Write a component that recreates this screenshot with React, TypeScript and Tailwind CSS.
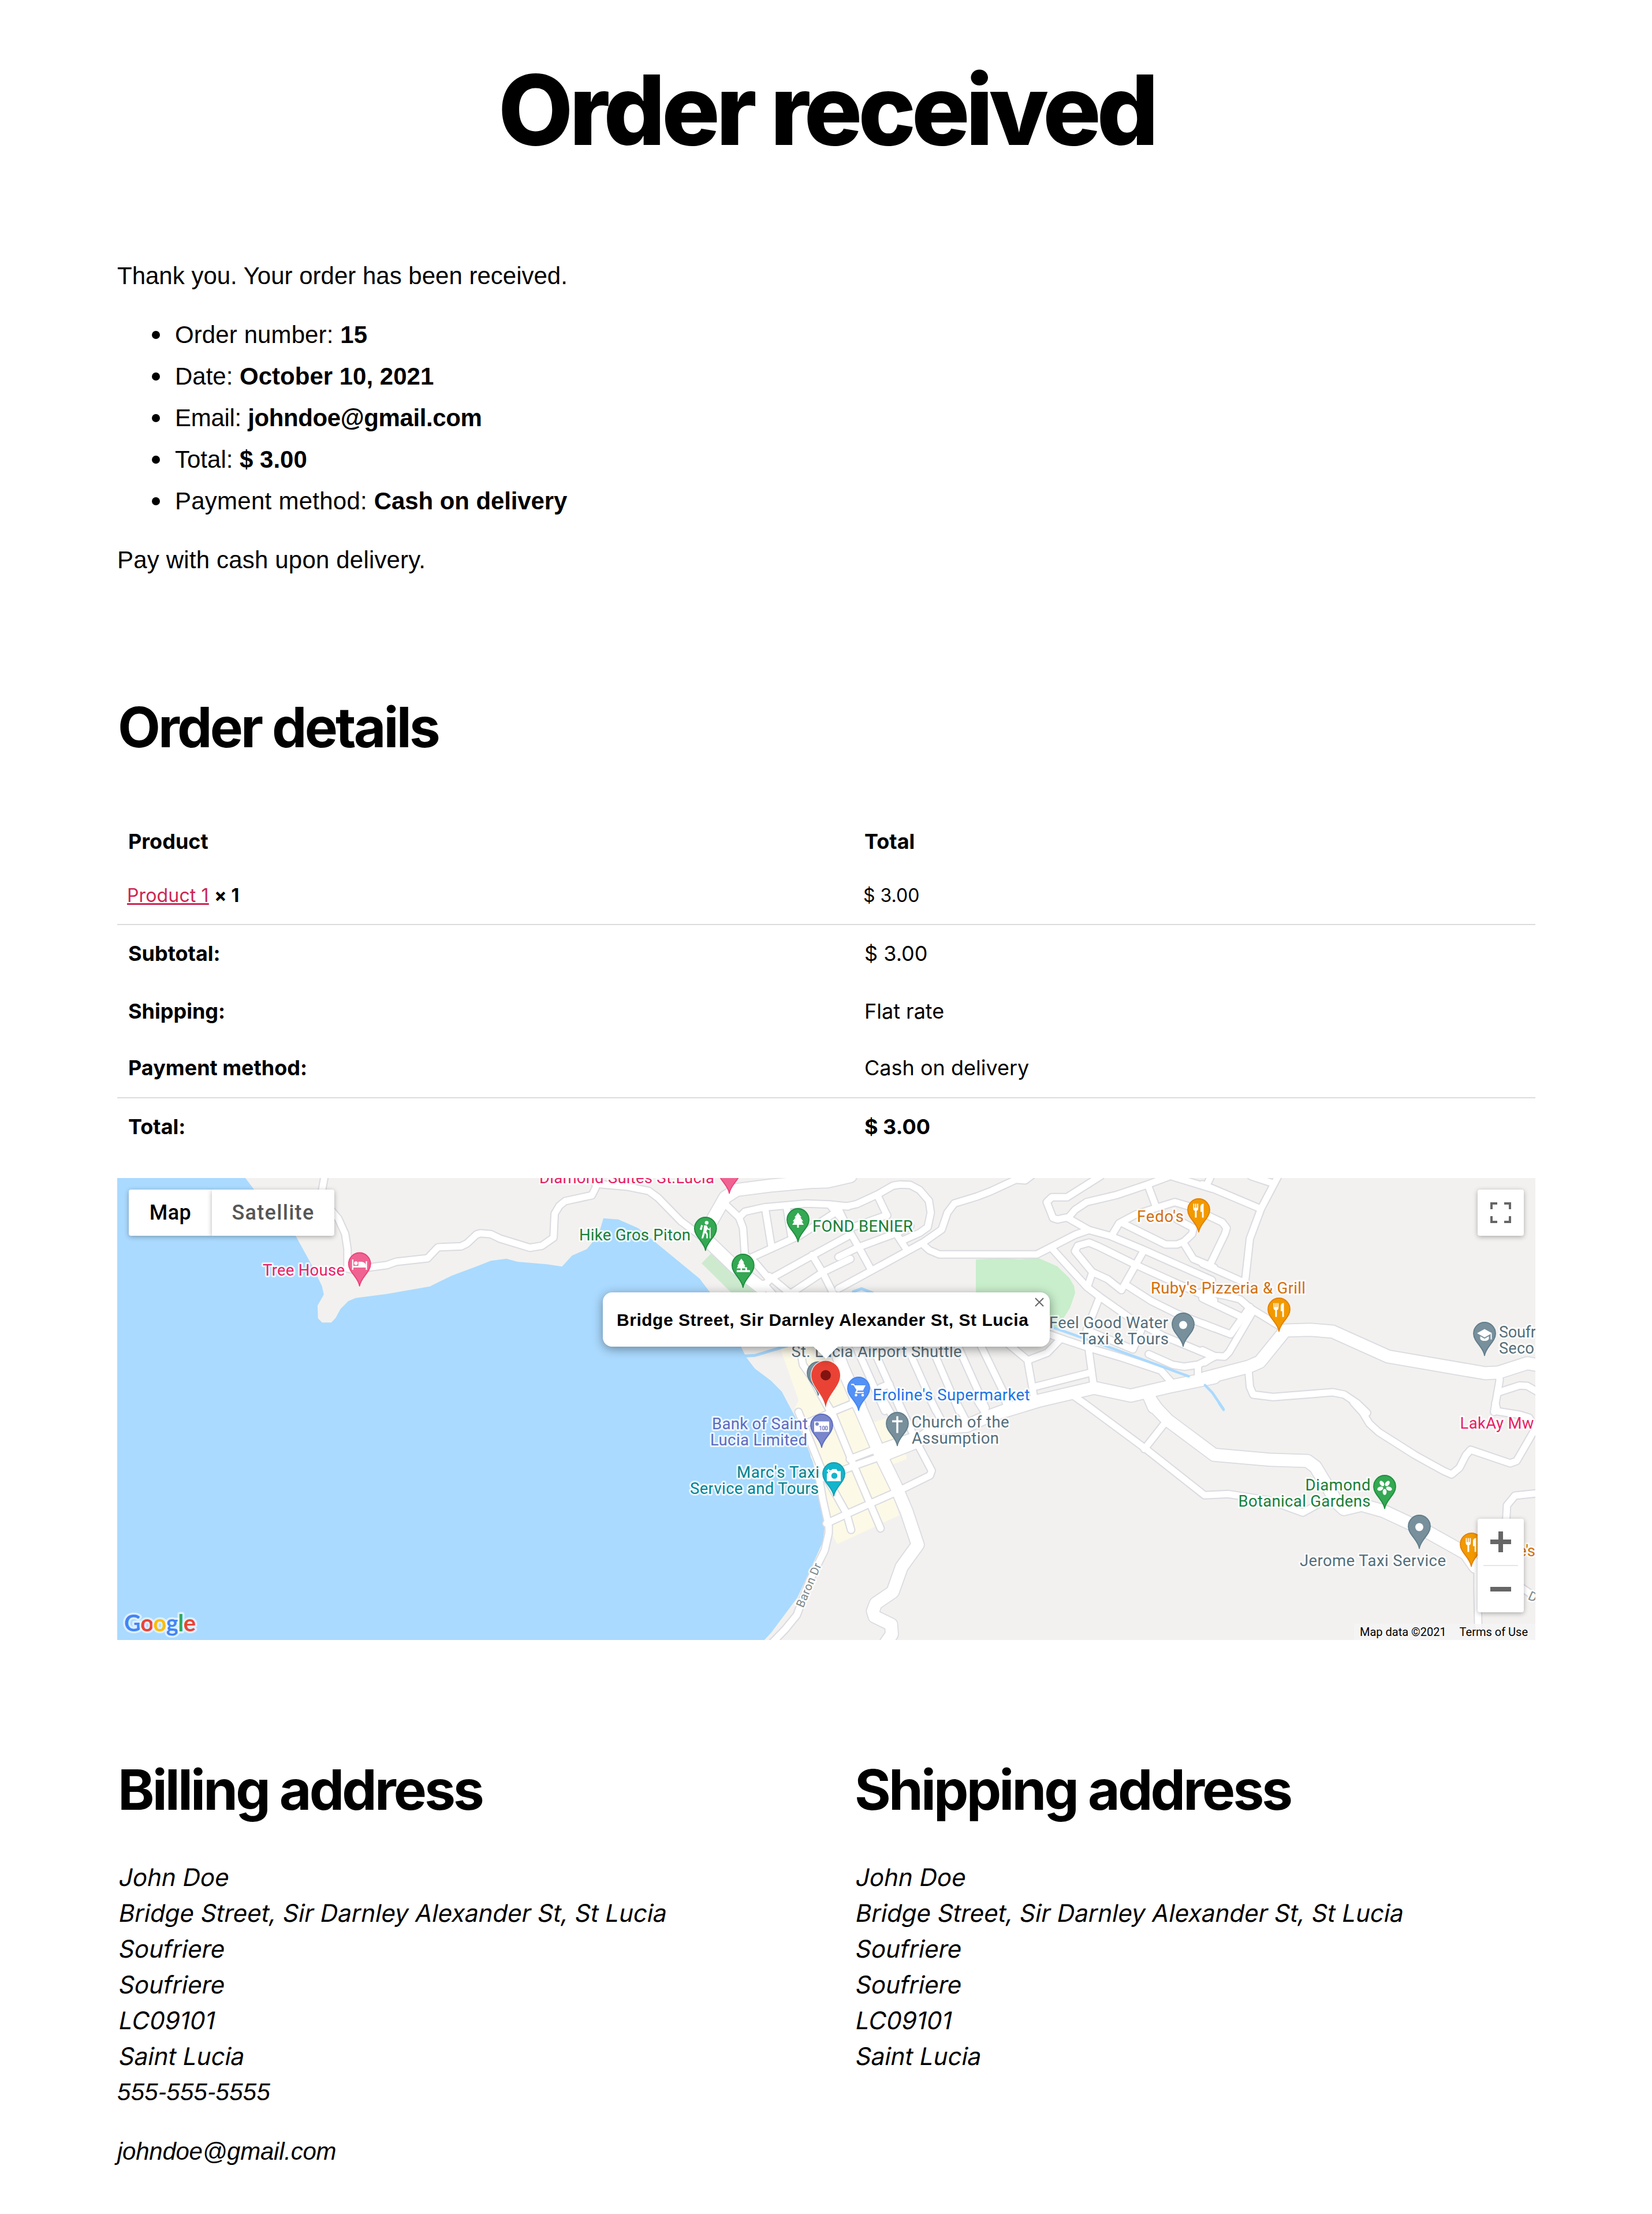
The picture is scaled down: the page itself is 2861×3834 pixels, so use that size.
import React from "react";

/* ---------- Map geometry ---------- */

type Tile = { x: number; y: number; sx: number; sy: number };

// Each survey tile stores its own local units; sx / sy give units per page pixel.
const NW: Tile = { x: 200, y: 2030, sx: 2.489, sy: 3 };
const N: Tile = { x: 830, y: 2030, sx: 2.489, sy: 3 };
const NE: Tile = { x: 1460, y: 2030, sx: 2.489, sy: 3 };
const E: Tile = { x: 2090, y: 2030, sx: 2.613, sy: 3 };
const S: Tile = { x: 1180, y: 2430, sx: 2.45, sy: 3 };
const SE: Tile = { x: 1820, y: 2430, sx: 1.823, sy: 3 };

function project(tile: Tile, pts: string) {
  const n = pts.trim().split(/\s+/).map(Number);
  const out: string[] = [];
  for (let i = 0; i < n.length; i += 2) {
    out.push(`${(tile.x + n[i] / tile.sx).toFixed(1)},${(tile.y + n[i + 1] / tile.sy).toFixed(1)}`);
  }
  return out.join(" ");
}

const minorRoads: [Tile, string[]][] = [
  [
    NW,
    [
      "903 10 890 95 925 190 960 240 990 320 1000 400 1000 500 1030 508 1090 495 1170 482 1210 465 1345 447 1390 390 1490 385 1515 370 1555 325 1568 319",
    ],
  ],
  [
    N,
    [
      "-10 322 5 317 50 322 90 345 218 392 270 382 320 340 325 215 345 175 370 150 485 120 500 85 510 50",
      "500 60 640 75 730 97 770 132 870 255 965 340",
      "1062 168 1120 235 1137 290 1145 430 1190 470 1250 555",
      "1120 235 1145 205 1230 182 1410 163 1510 167 1590 178",
      "1232 185 1260 390",
      "1325 180 1345 330",
      "1160 450 1380 330 1540 205",
      "1512 172 1568 250 1600 320",
      "1225 590 1260 550 1440 430 1600 325",
      "1435 430 1480 520 1530 640",
      "1330 640 1480 520 1600 450",
      "1250 540 1340 630",
      "1225 580 1270 640",
      "1385 930 1395 1000 1430 1060 1475 1160 1512 1240",
    ],
  ],
  [
    NE,
    [
      "-10 176 20 176 60 165 150 115 215 70 245 64 290 66 330 92 370 148 378 210 365 285 330 315 255 355",
      "820 10 785 42 745 38 640 97 580 125 480 162 450 210 425 298 345 365 -20 605",
      "342 372 372 405 415 427 835 427 895 390 1000 325 1060 300",
      "-20 440 65 390 240 312 290 280",
      "148 120 190 225",
      "235 330 272 398",
      "-20 190 20 290 68 390 118 500",
      "30 290 190 222",
      "1110 20 965 130 900 130 878 155 905 238 925 245 965 235 1060 300 1150 330 1290 400 1590 560",
      "970 238 1000 195 1050 155 1180 118 1310 65 1420 15",
      "1400 15 1590 85",
      "1315 70 1350 182",
      "1160 325 1190 265 1260 220 1350 185 1430 155 1500 180 1560 200",
      "1200 262 1390 375 1440 375 1470 360 1505 320 1510 290 1440 245",
      "1470 372 1510 450 1600 495",
      "900 395 1050 595 1110 650 1240 760 1380 850 1600 960",
      "1055 590 1075 520 1000 410 1012 382 1060 365 1100 385 1260 480 1600 665",
      "1080 522 1140 555 1200 612 1290 420",
      "1220 585 1330 670 1440 735 1600 810",
      "1105 650 1050 820 1250 920 1285 820",
      "1318 945 1420 1000 1470 1010 1530 1000 1590 965",
      "1530 1005 1530 1075",
      "1060 930 1080 1105",
      "825 1115 1070 1040",
      "700 880 795 975 828 1200",
      "800 975 880 938 935 870",
      "880 838 960 872 1060 912 1200 962 1370 1030 1430 1110",
      "590 890 725 1225",
      "490 890 615 1225",
      "375 890 500 1240",
      "270 890 400 1240",
      "120 890 250 1240",
      "50 890 180 1240",
      "160 1120 200 1100",
    ],
  ],
  [
    E,
    [
      "325 15 245 190 195 345 173 570",
      "-20 62 240 188",
      "15 30 0 65",
      "200 20 300 58",
      "0 222 70 260 90 290 82 320 15 480",
      "-20 475 165 570 172 600",
      "-20 620 80 640 150 660 195 705 330 800 350 820",
      "-20 655 155 750",
      "-20 785 108 842 195 700",
      "210 720 100 935 80 958 35 955 -20 925",
      "35 955 -10 988",
      "188 1020 195 1115 210 1155 300 1168 570 1143 622 1155 680 1200 725 1250",
      "1322 1045 1325 1080 1300 1245",
      "1315 1145 1415 1108 1450 1110 1510 1150",
    ],
  ],
  [
    S,
    [
      "497 45 590 330 700 570 720 658",
      "583 380 600 500 625 635 625 675 608 765 545 920 490 1100 440 1175 385 1245",
      "605 -20 640 50 720 290 800 520 845 650",
      "530 105 640 45 760 -15",
      "715 290 815 243 975 175",
      "585 395 745 320 850 275",
      "615 625 700 577 800 522 905 465 1055 375 1062 350 1008 225",
      "860 -10 905 90",
      "920 -10 1005 220",
      "1060 -10 1110 105",
      "1165 -10 1205 85",
      "1258 -10 1300 70",
      "1375 -10 1388 30",
    ],
  ],
  [
    SE,
    [
      "70 -40 105 0 300 238 485 478 560 472 690 505 795 568 860 510 900 500",
      "365 92 295 238",
      "955 -5 985 50 1005 105 1035 150 1150 270 1240 352 1265 370 1290 335 1310 270 1325 242 1450 312 1470 300 1530 130 1510 75 1480 60 1410 42 1403 0",
      "1550 465 1465 480 1440 530 1437 620",
      "1347 830 1347 960 1350 1240",
      "1470 940 1550 1030",
    ],
  ],
];

const mainRoads: [Tile, string[]][] = [
  [
    N,
    [
      "1600 20 1500 48 1430 50 1250 70 1110 92 1060 130 985 290 980 350 1100 490 1215 600",
    ],
  ],
  [NE, ["-60 830 0 1020 72 1215"]],
  [
    S,
    [
      "740 -20 760 30 830 230 910 430 955 560 1003 735 935 850 897 980 825 1040 813 1080 820 1108 890 1150 893 1200 868 1245",
      "845 275 1000 200 1080 130 1210 118 1290 75 1390 30 1500 -12",
    ],
  ],
  [NE, ["700 1240 850 1185 1082 1120 1240 1160 1400 1115 1600 1066"]],
  [NE, ["1315 1150 1340 1220"]],
  [
    E,
    [
      "-10 1070 190 1010 240 985 355 822 470 818 570 828 820 957 1260 1044 1320 1040 1450 992 1510 1004",
    ],
  ],
  [
    SE,
    [
      "318 -10 335 30 370 90 515 268 690 293 810 300 835 330 905 520 925 550 980 528 1050 560 1180 660 1310 780 1340 850",
    ],
  ],
];

const WATER =
  "203,2040 425,2040 440,2060 512,2140 539.5,2190 557.6,2227 560.8,2241.7 550,2260.7 550.7,2283 558,2290.3 573.6,2290.3 581.3,2282.3 589.7,2266.7 603,2253.3 615.8,2247.7 670,2240.7 744.4,2227.7 782.6,2209 830,2191.3 850,2183.3 877,2179.7 896.3,2185 946.5,2189.3 973.4,2193.3 990.7,2174.3 1016,2163.3 1025.7,2151.7 1039,2130 1045,2109.7 1071,2111.7 1105.2,2126.7 1211.7,2214.3 1229.8,2238.3 1283.2,2332 1292,2350 1307.3,2370 1335,2390.7 1354,2410 1364.5,2430 1378,2455 1406.5,2526.7 1416.7,2570 1427.8,2646.7 1424.9,2670 1402.4,2720 1380.8,2766.7 1336,2826.7 1323.7,2840 203,2840";

/* ---------- Pins ---------- */

type IconName =
  | "bed" | "hiker" | "tree" | "park" | "food" | "dot" | "school"
  | "cart" | "bank" | "camera" | "cross" | "flower" | "none";

function PinIcon({ name }: { name: IconName }) {
  switch (name) {
    case "bed":
      return (
        <g>
          <path d="M-13-9h2.200V2h21.600V-6H13V9h-2.200V5h-21.600v4H-13z" />
          <circle cx="-6.300" cy="-2.500" r="3.200" />
          <path d="M-2 2.500V-5h4c5 0 9 2 9 7.500z" />
        </g>
      );
    case "hiker":
      return (
        <g>
          <circle cx="2" cy="-11" r="3.200" />
          <path d="M-7.500-7.500l3 1.200-2.200 8-3.300-1.200z" />
          <path d="M-2.500-6.500h4.500l2.500 5 3.500 1.500-.8 2L3 .5 1.500 4 4 8v8H1.500V9.500L-1 6.500-4 16h-3L-3.500 2z" />
          <path d="M8-3v19" stroke="white" strokeWidth="1.600" fill="none" />
        </g>
      );
    case "tree":
      return <path d="M0-13l6 8H4l5 7H6.500L10 8H1.500v5h-3V8H-10l3.500-6H-9l5-7h-2z" transform="translate(0,-.5)" />;
    case "park":
      return (
        <g>
          <path d="M-4-14l5 7H-.5l3.500 6H1.500L4 3h-6.700v5h-2.600V3H-12l2.500-4H-11l3.500-6H-9z" transform="translate(1,1)" />
          <path d="M-11 7H4V2h3v5h5v3.500h-23z" />
        </g>
      );
    case "food":
      return (
        <g>
          <path d="M-9.500-12h1.800v7h1.600v-7h1.800v7h1.600v-7h1.800v8.500c0 2-1 3.200-2.700 3.700V12h-3V.200C-8.500-.300-9.500-1.500-9.500-3.500z" />
          <path d="M8.500-12V12H5.700V2H3v-8c0-4 2-6 5.500-6z" />
        </g>
      );
    case "dot":
      return <circle r="6.900" />;
    case "school":
      return (
        <g>
          <path d="M0-9l13 7.200L0 5.500-13-1.800z" />
          <path d="M-7.500 3.500L0 7.800l7.500-4.300v4.700C5.500 11 3 11.500 0 11.500s-5.500-.5-7.500-3.300z" />
          <path d="M10.500-1H12.500V9H10.500z" />
        </g>
      );
    case "cart":
      return (
        <g>
          <path d="M-13-9h5l1.200 2.500H12L7.500 2.500h-9L-3 5H9v2H-6.500L-3.700 1.500-9-7h-4z" />
          <circle cx="-4.500" cy="10.500" r="2.300" />
          <circle cx="7" cy="10.500" r="2.300" />
        </g>
      );
    case "bank":
      return (
        <g>
          <rect x="-13" y="-8" width="26" height="18" />
          <circle cx="-8" cy="-3.500" r="3" fill="#7986cb" />
          <text x="-5" y="7.500" fontSize="10" fontWeight="700" fill="#7986cb" textLength="16" fontFamily="Roboto, sans-serif">100</text>
        </g>
      );
    case "camera":
      return (
        <g>
          <path d="M-12-2.500h2V-5h3.500v-3H-4l1-2h7.500l2 3.500H12V11h-24z" transform="translate(0,.5)" />
          <path d="M-12-6.500h5.500M-9.200-9.500v6" stroke="white" strokeWidth="2" />
          <circle cx="1" cy="2" r="5.300" fill="#12b5cb" />
        </g>
      );
    case "cross":
      return <path d="M-1.700-14h3.400v7H9v3.500H1.700V15h-3.400V-3.500H-9V-7h7.300z" />;
    case "flower":
      return (
        <g>
          {[36, 108, 180, 252, 324].map((a) => (
            <ellipse key={a} cx="0" cy="-8" rx="3.400" ry="5.200" transform={`rotate(${a})`} />
          ))}
        </g>
      );
    default:
      return null;
  }
}

const palette = {
  pink: ["#f06292", "#ec407a"],
  green: ["#34a853", "#1e8e3e"],
  orange: ["#f29900", "#e37f00"],
  grey: ["#78909c", "#607d8b"],
  blue: ["#5491f5", "#4285f4"],
  indigo: ["#7986cb", "#5c6bc0"],
  teal: ["#12b5cb", "#129eaf"],
};

const pins: { x: number; y: number; c: keyof typeof palette; icon: IconName }[] = [
  { x: 622.7, y: 2227, c: "pink", icon: "bed" },
  { x: 1263, y: 2066.5, c: "pink", icon: "none" },
  { x: 1221.8, y: 2165.5, c: "green", icon: "hiker" },
  { x: 1382, y: 2150.5, c: "green", icon: "tree" },
  { x: 1286.8, y: 2229.5, c: "green", icon: "park" },
  { x: 2076, y: 2133.5, c: "orange", icon: "food" },
  { x: 2215, y: 2305.5, c: "orange", icon: "food" },
  { x: 2049, y: 2331.5, c: "grey", icon: "dot" },
  { x: 2571, y: 2347.5, c: "grey", icon: "school" },
  { x: 1487, y: 2442.5, c: "blue", icon: "cart" },
  { x: 1423, y: 2506.5, c: "indigo", icon: "bank" },
  { x: 1444, y: 2590.5, c: "teal", icon: "camera" },
  { x: 1554, y: 2503.5, c: "grey", icon: "cross" },
  { x: 1417, y: 2416, c: "grey", icon: "none" },
  { x: 2398, y: 2612.5, c: "green", icon: "flower" },
  { x: 2458, y: 2681.5, c: "grey", icon: "dot" },
  { x: 2548, y: 2712.5, c: "orange", icon: "food" },
];

const labels: [string, number, number, number | null, string][] = [
  ["Tree House", 455, 2208.5, 142, "#e91e63"],
  ["Diamond Suites St.Lucia", 934, 2048.5, 303, "#e91e63"],
  ["Hike Gros Piton", 1003, 2147.5, 193, "#188038"],
  ["FOND BENIER", 1407, 2132.5, 174, "#188038"],
  ["Fedo's", 1969, 2115.5, 81, "#d56e0c"],
  ["Ruby's Pizzeria & Grill", 1993, 2239.5, 268, "#d56e0c"],
  ["Feel Good Water", 1817, 2299.5, 206, "#546e7a"],
  ["Taxi & Tours", 1869, 2327.5, 155, "#546e7a"],
  ["Soufr", 2596, 2315.5, 64, "#546e7a"],
  ["Seco", 2596, 2343.5, 61, "#546e7a"],
  ["St. Lucia Airport Shuttle", 1370.5, 2350, 295, "#546e7a"],
  ["Eroline's Supermarket", 1511.5, 2424.5, 272, "#1a73e8"],
  ["Bank of Saint", 1233, 2474.5, 166, "#5c6bc0"],
  ["Lucia Limited", 1230, 2502.5, 168, "#5c6bc0"],
  ["Marc's Taxi", 1276, 2558.5, 143, "#00838f"],
  ["Service and Tours", 1195, 2586.5, 223, "#00838f"],
  ["Church of the", 1578.5, 2471.5, 169, "#546e7a"],
  ["Assumption", 1579, 2500, 151, "#546e7a"],
  ["Diamond", 2260.5, 2580.5, 113, "#188038"],
  ["Botanical Gardens", 2144.5, 2609, 229, "#188038"],
  ["Jerome Taxi Service", 2251, 2712, 253, "#546e7a"],
  ["LakAy Mw", 2528.5, 2474, 128, "#e91e63"],
  ["e's", 2629, 2695, 30, "#d56e0c"],
];

function MapCanvas() {
  const roads = (list: [Tile, string[]][], width: number, color: string) =>
    list.flatMap(([tile, lines], i) =>
      lines.map((line, j) => (
        <polyline key={`${width}-${i}-${j}`} points={project(tile, line)} stroke={color} strokeWidth={width} />
      )),
    );
  return (
    <svg viewBox="203 2040 2456 800" className="block h-full w-full" fontFamily="Roboto, sans-serif">
      <rect x="203" y="2040" width="2456" height="800" fill="#f2f1ef" />
      <polygon points={WATER} fill="#aadaff" />
      <polygon points="1231,2171 1308,2238 1340,2290 1310,2290 1266,2238 1215,2187.700" fill="#cdeacf" />
      <polygon
        points="1690,2181 1737,2178.700 1765,2180.700 1798.700,2178.700 1830.800,2192.700 1851.700,2212.700 1860,2226.700 1862,2239 1853,2265 1841.700,2283 1830,2300 1690,2290"
        fill="#c8eecb"
      />
      <polygon
        points="1346,2320 1440,2320 1474,2430 1500,2450 1557.500,2624 1450,2674 1441,2657 1425,2590 1417,2550 1404,2523 1398,2480 1376,2440 1383,2425"
        fill="#fcf9e7"
      />
      <polygon points="1513,2463 1535,2456 1570,2522 1570,2527 1543,2537" fill="#fcf9e7" />
      <polygon points={project(S, "735 297 808 256 820 285 740 325")} fill="#c8eecb" />
      <g fill="none" stroke="#aadaff" strokeWidth="5">
        <polyline points={project(NE, "40 640 45 620 80 605 130 628")} />
        <polyline points={project(N, "1140 955 1188 952 1330 900")} />
      </g>
      <g fill="none" strokeLinejoin="round" strokeLinecap="round">
        {roads(minorRoads, 15, "#dadbe0")}
        {roads(mainRoads, 24.5, "#dadbe0")}
        {roads(minorRoads, 11, "#ffffff")}
        {roads(mainRoads, 21, "#ffffff")}
      </g>
      <g fill="none" stroke="#aadaff" strokeWidth="4.500" strokeLinecap="round">
        <polyline points={project(NE, "890 800 1110 893 1490 1060")} />
        <polyline points={project(E, "-8 1106 25 1145 75 1230")} />
        <polyline points={project(SE, "531 0 545 34")} />
      </g>

      {pins.map((p) => (
        <g key={`${p.x}-${p.y}`} transform={`translate(${p.x},${p.y})`}>
          <path
            d="M0 0C-2-15-19-24-19-38A19 19.500 0 0 1 19-38C19-24 2-15 0 0z"
            fill={palette[p.c][0]}
            stroke={palette[p.c][1]}
            strokeWidth="1.800"
            strokeLinejoin="round"
          />
          <g transform="translate(0,-37)" fill="white">
            <PinIcon name={p.icon} />
          </g>
        </g>
      ))}

      <g fontSize="27.500" paintOrder="stroke" stroke="#ffffff" strokeOpacity=".75" strokeWidth="6" strokeLinejoin="round">
        {labels.map(([text, x, y, len, color]) => (
          <text key={text} x={x} y={y} fill={color} {...(len ? { textLength: len } : {})}>
            {text}
          </text>
        ))}
        <text fontSize="20" fill="#7b8587" textLength="81" transform="translate(1391,2785) rotate(-67)">
          Baron Dr
        </text>
        <text fontSize="22" fill="#7b8587" transform="translate(2645,2769) rotate(24)">
          D
        </text>
      </g>

      {/* Google wordmark */}
      <text
        x="215"
        y="2825"
        fontSize="40"
        fontFamily="Lato, sans-serif"
        fontWeight="700"
        textLength="124"
        paintOrder="stroke"
        stroke="#ffffff"
        strokeOpacity=".6"
        strokeWidth="7"
        strokeLinejoin="round"
      >
        <tspan fill="#4285f4">G</tspan>
        <tspan fill="#ea4335">o</tspan>
        <tspan fill="#fbbc04">o</tspan>
        <tspan fill="#4285f4">g</tspan>
        <tspan fill="#34a853">l</tspan>
        <tspan fill="#ea4335">e</tspan>
      </text>
    </svg>
  );
}

function RedMarker() {
  return (
    <svg viewBox="-27 -84 54 86" className="absolute left-[1200px] top-[314px] h-[86px] w-[54px]">
      <path
        d="M0 0C-3-24-25-36-25-56.500A25 25 0 0 1 25-56.500C25-36 3-24 0 0z"
        fill="#ea4335"
        stroke="white"
        strokeWidth="2"
        paintOrder="stroke"
      />
      <circle cy="-56.500" r="9" fill="#811411" />
    </svg>
  );
}

function OrderMap() {
  return (
    <section className="relative mt-10 h-[800px] w-full overflow-hidden font-[Roboto,sans-serif]">
      <MapCanvas />
      <RedMarker />

      <div className="absolute left-[841px] top-[198px] drop-shadow-[0_4px_9px_rgba(0,0,0,0.4)]">
        <div className="flex h-[94px] w-[774px] items-center rounded-2xl bg-white pl-6 font-['Liberation_Sans',sans-serif] text-[30px] font-bold tracking-[0.53px] whitespace-nowrap text-black">
          Bridge Street, Sir Darnley Alexander St, St Lucia
        </div>
        <svg viewBox="0 0 44 22" className="absolute left-[364px] top-[93px] h-[22px] w-[44px]">
          <path d="M0 0H44L22.500 22z" fill="white" />
        </svg>
        <svg viewBox="0 0 16 16" className="absolute left-[748px] top-[9px] h-4 w-4">
          <path d="M1 1L15 15M15 1L1 15" stroke="#666" strokeWidth="2" />
        </svg>
      </div>

      <div className="absolute left-5 top-5 flex h-20 text-[36px] font-medium">
        <button className="flex w-[144px] items-center justify-center rounded-l bg-white tracking-[0.4px] text-black shadow-[0_2px_8px_rgba(0,0,0,0.3)]">
          Map
        </button>
        <button className="relative flex w-[212px] items-center justify-center rounded-r bg-white tracking-[1.3px] text-[#565656] shadow-[0_2px_8px_rgba(0,0,0,0.3)]">
          Satellite
        </button>
      </div>

      <button className="absolute right-5 top-5 flex h-20 w-20 items-center justify-center rounded bg-white shadow-[0_2px_8px_rgba(0,0,0,0.3)]">
        <svg viewBox="0 0 36 36" className="h-9 w-9">
          <path d="M2 12V2H12M24 2H34V12M34 24V34H24M12 34H2V24" fill="none" stroke="#666" strokeWidth="4" />
        </svg>
      </button>

      <div className="absolute bottom-12 right-5 flex h-[162px] w-20 flex-col items-center rounded bg-white shadow-[0_2px_8px_rgba(0,0,0,0.3)]">
        <div className="flex h-20 items-center">
          <svg viewBox="0 0 36 36" className="h-9 w-9">
            <path d="M0 18H36M18 0V36" stroke="#666" strokeWidth="8" />
          </svg>
        </div>
        <div className="h-0.5 w-[60px] bg-[#e6e6e6]" />
        <div className="flex h-20 items-center">
          <svg viewBox="0 0 36 36" className="h-9 w-9">
            <path d="M0 18H36" stroke="#666" strokeWidth="8" />
          </svg>
        </div>
      </div>

      <div className="absolute bottom-0 right-0 flex h-7 w-[314px] items-center justify-between bg-[#f5f5f5]/80 pl-[10px] pr-[13px] text-[20px] text-black">
        <span>Map data ©2021</span>
        <span>Terms of Use</span>
      </div>
    </section>
  );
}

/* ---------- Page sections ---------- */

const summary: [string, string, string, string][] = [
  ["Order number:", "15", "tracking-[0.1px]", ""],
  ["Date:", "October 10, 2021", "", ""],
  ["Email:", "johndoe@gmail.com", "tracking-[-0.3px]", "tracking-[-0.4px]"],
  ["Total:", "$ 3.00", "", ""],
  ["Payment method:", "Cash on delivery", "tracking-[0.25px]", "tracking-[-0.1px]"],
];

function Heading({ children }: { children: React.ReactNode }) {
  return (
    <h2 className="pl-[1px] text-[96px] font-bold leading-[116px] tracking-[-0.0403em] whitespace-nowrap">
      {children}
    </h2>
  );
}

function OrderTable() {
  return (
    <div className="mt-[93px] text-[36px] leading-[44px]">
      <div className="grid h-[94px] grid-cols-[1275px_1fr] items-center px-[19px] font-bold">
        <span>Product</span>
        <span>Total</span>
      </div>
      <div className="grid h-[98px] grid-cols-[1275px_1fr] items-center border-b-2 border-[#dcdcdc] px-[17px] pb-[2px] text-[32px]">
        <span className="tracking-[0.15px]">
          <a className="text-[#cd2653] underline">Product 1</a> <strong className="font-bold">× 1</strong>
        </span>
        <span>$ 3.00</span>
      </div>
      <div className="grid h-[98px] grid-cols-[1275px_1fr] items-center px-[19px]">
        <span className="font-bold">Subtotal:</span>
        <span>$ 3.00</span>
      </div>
      <div className="grid h-[101px] grid-cols-[1275px_1fr] items-center px-[19px]">
        <span className="font-bold">Shipping:</span>
        <span>Flat rate</span>
      </div>
      <div className="grid h-[101px] grid-cols-[1275px_1fr] items-center border-b-2 border-[#dcdcdc] px-[19px] pb-[3px]">
        <span className="font-bold">Payment method:</span>
        <span>Cash on delivery</span>
      </div>
      <div className="grid h-[98px] grid-cols-[1275px_1fr] items-center px-[19px] font-bold">
        <span>Total:</span>
        <span>$ 3.00</span>
      </div>
    </div>
  );
}

const addressLines = [
  "John Doe",
  "Bridge Street, Sir Darnley Alexander St, St Lucia",
  "Soufriere",
  "Soufriere",
  "LC09101",
  "Saint Lucia",
];

function Address({ title, phone, email }: { title: string; phone?: string; email?: string }) {
  return (
    <div>
      <Heading>{title}</Heading>
      <address className="mt-[63px] text-[42px] not-italic leading-[62px] whitespace-nowrap">
        {addressLines.map((line, i) => (
          <div key={i} className="origin-[0_50px] skew-x-[-11deg]">
            {line}
          </div>
        ))}
        {phone && <p className="font-['Liberation_Sans',sans-serif] italic tracking-[0.3px]">{phone}</p>}
        {email && (
          <p className="mt-[41px] font-['Liberation_Sans',sans-serif] italic tracking-[-0.25px]">{email}</p>
        )}
      </address>
    </div>
  );
}

export default function App() {
  return (
    <main className="min-h-[3834px] w-[2861px] bg-white pl-[203px] pr-[202px] pt-[95px] font-[Inter,sans-serif] text-black">
      <h1 className="text-center text-[168px] font-extrabold leading-[191px] tracking-[-0.0415em]">
        <span className="tracking-[-0.039em]">Order</span> <span className="tracking-[-0.0435em]">received</span>
      </h1>

      <div className="mt-[161px] font-['Liberation_Sans',sans-serif] text-[42px] leading-[62px]">
        <p>Thank you. Your order has been received.</p>
        <ul className="mt-[35px] pl-[60px]">
          {summary.map(([label, value, labelTracking, valueTracking]) => (
            <li key={label} className="flex h-[72px] items-center">
              <span className="mr-[26px] h-[14px] w-[14px] rounded-full bg-black" />
              <span className={labelTracking}>
                {label} <strong className={`font-bold ${valueTracking}`}>{value}</strong>
              </span>
            </li>
          ))}
        </ul>
        <p className="mt-[35px] tracking-[0.18px]">Pay with cash upon delivery.</p>
      </div>

      <div className="mt-[200px]">
        <Heading>Order details</Heading>
      </div>
      <OrderTable />
      <OrderMap />

      <section className="mt-[201px] grid grid-cols-[1276px_1fr]">
        <Address title="Billing address" phone="555-555-5555" email="johndoe@gmail.com" />
        <Address title="Shipping address" />
      </section>
    </main>
  );
}
